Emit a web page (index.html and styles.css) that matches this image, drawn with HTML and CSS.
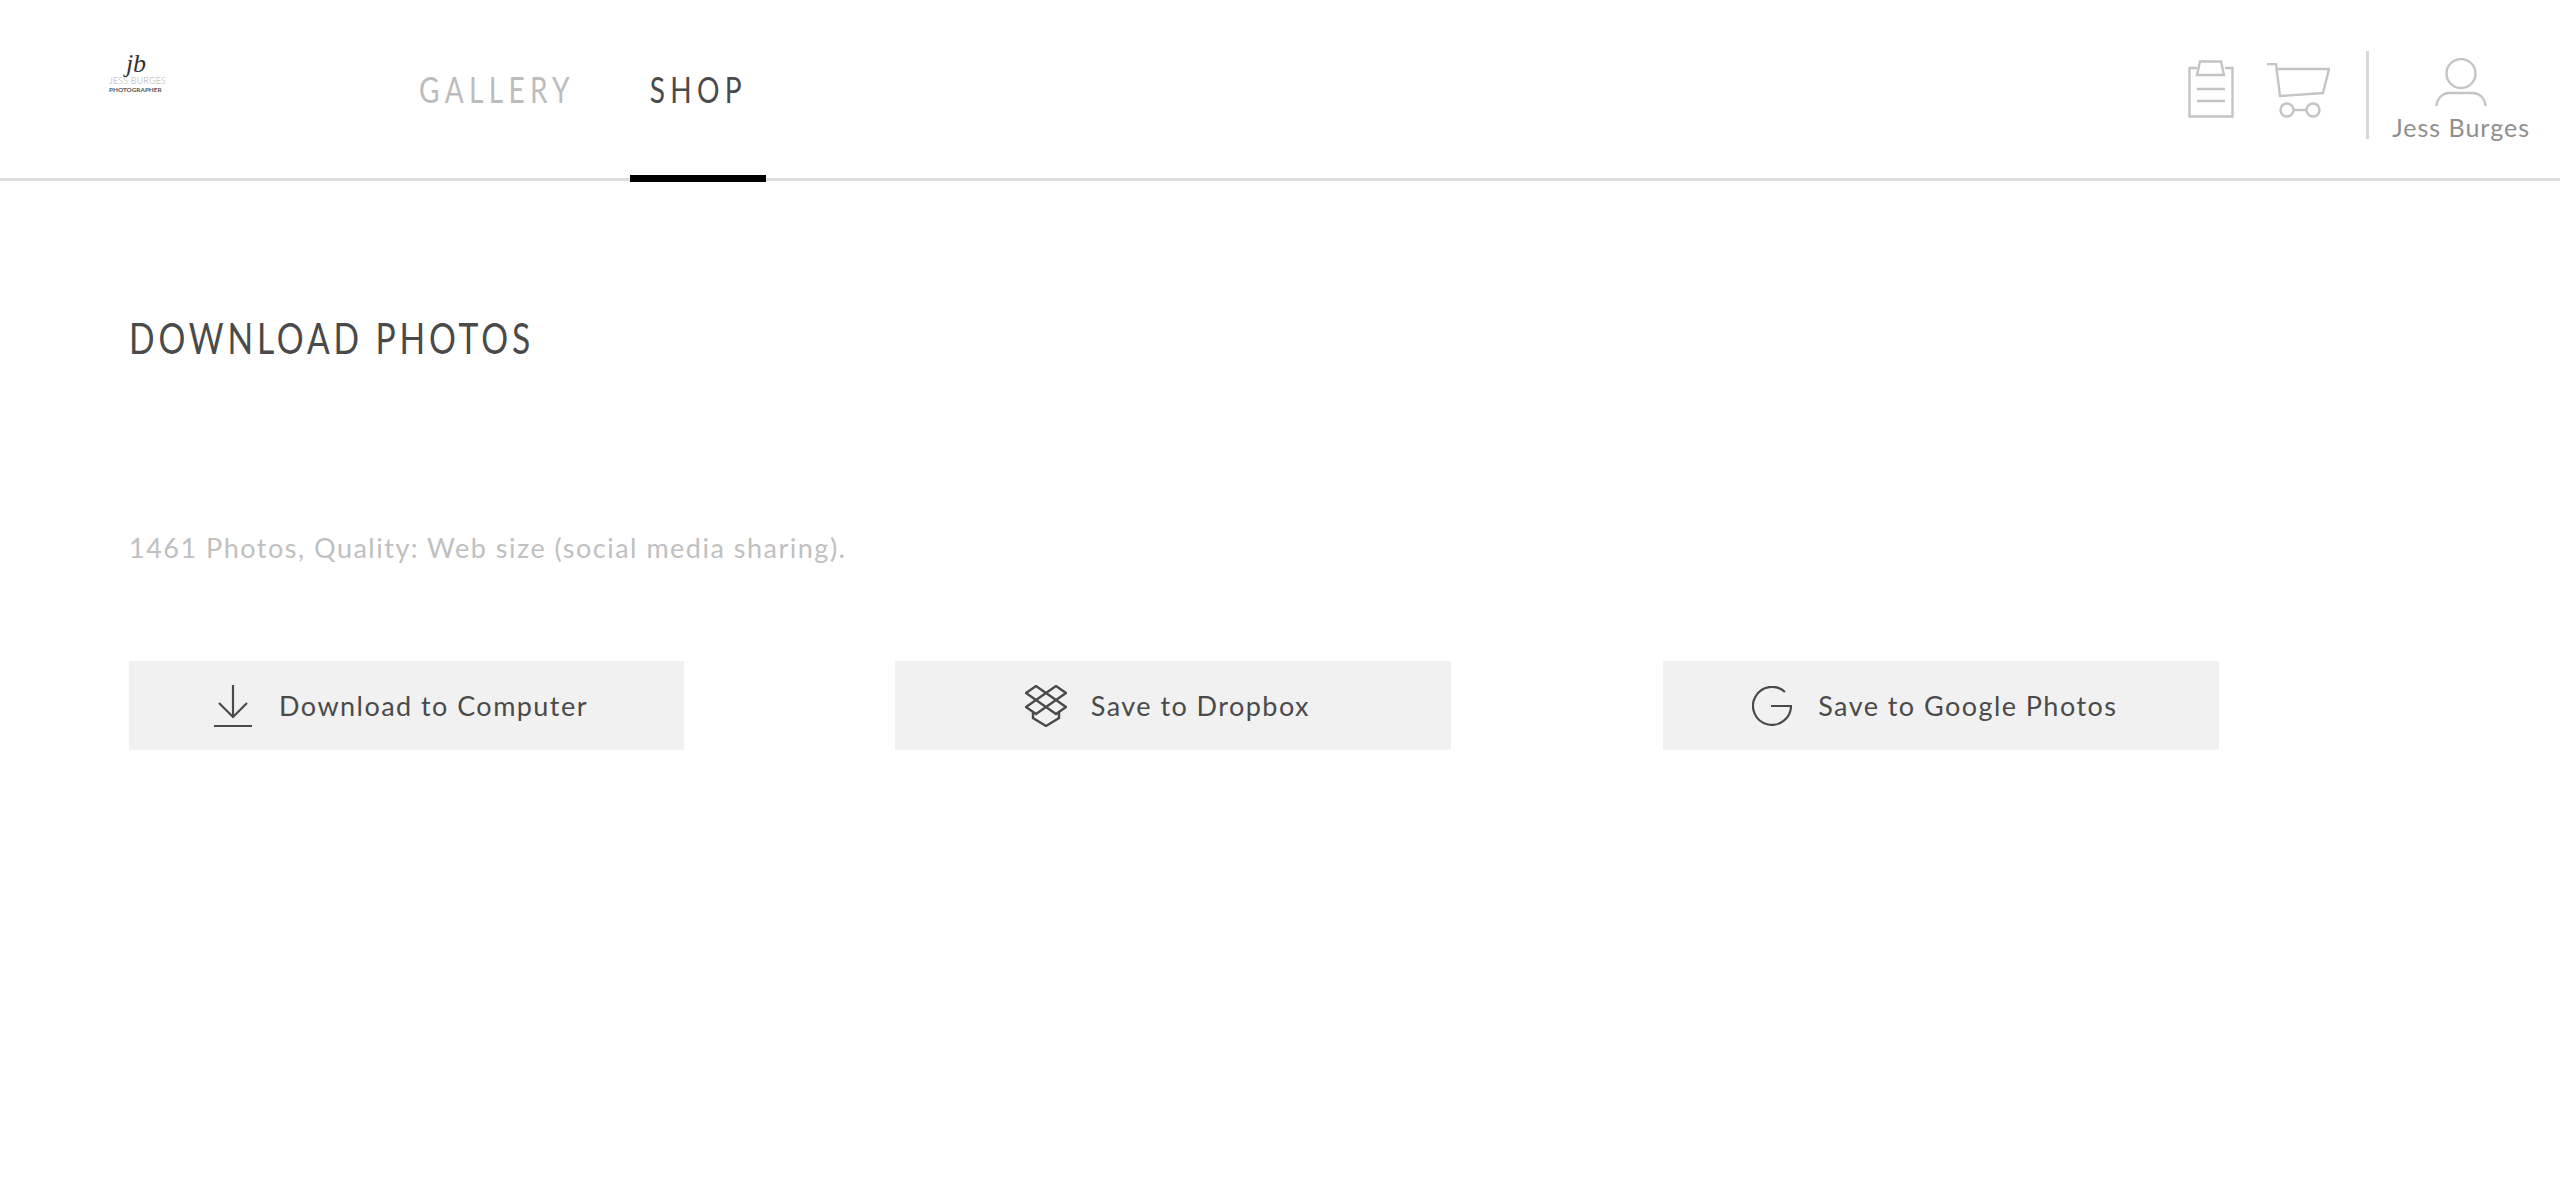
FILE: index.html
```html
<!DOCTYPE html>
<html lang="en">
<head>
<meta charset="utf-8">
<title>Download Photos</title>
<link rel="stylesheet" href="styles.css">
</head>
<body>
<header class="topbar">
  <a class="logo">
    <span class="logo-mark">jb</span>
    <span class="logo-name">JESS BURGES</span>
    <span class="logo-role">PHOTOGRAPHER</span>
  </a>
  <nav class="nav">
    <a class="nav-item nav-item-gallery"><span class="narrow">GALLERY</span></a>
    <a class="nav-item nav-item-active"><span class="narrow">SHOP</span></a>
  </nav>
  <div class="tools">
    <svg class="icon-clip" width="46" height="58" viewBox="0 0 46 58" fill="none" stroke="#c4c4c4" stroke-width="2.4">
      <path d="M9 8H1.5V56.5H44.5V8H37"/>
      <path d="M12 1.5H33L36 15H9Z"/>
      <path d="M9 29H37M9 41H37"/>
    </svg>
    <svg class="icon-cart" width="64" height="56" viewBox="0 0 64 56" fill="none" stroke="#c4c4c4" stroke-width="2.4">
      <path d="M1 1H10L14 33L57 30L63 6H11"/>
      <circle cx="21" cy="47" r="6.5"/>
      <circle cx="47" cy="47" r="6.5"/>
      <path d="M27.5 47H40.5"/>
    </svg>
    <div class="divider"></div>
    <div class="user">
      <svg width="52" height="48" viewBox="0 0 52 48" fill="none" stroke="#c4c4c4" stroke-width="2.4">
        <circle cx="26" cy="15.5" r="14.5"/>
        <path d="M1.5 48C2 40 8 35 14 35H38C44 35 50 40 50.5 48"/>
      </svg>
      <span class="user-name">Jess Burges</span>
    </div>
  </div>
</header>
<main class="content">
  <h1 class="title">DOWNLOAD PHOTOS</h1>
  <p class="summary">1461 Photos, Quality: Web size (social media sharing).</p>
  <div class="actions">
    <button class="action">
      <svg width="40" height="44" viewBox="0 0 40 44" fill="none" stroke="#4a4a4a" stroke-width="2.2">
        <path d="M20 1V33M6 19L20 33L34 19M1 42H39"/>
      </svg>
      <span>Download to Computer</span>
    </button>
    <button class="action action-dropbox">
      <svg width="42" height="42" viewBox="0 0 42 42" fill="none" stroke="#4a4a4a" stroke-width="2.4">
        <path d="M11 1L21 8L11 15L1 8Z"/>
        <path d="M31 1L41 8L31 15L21 8Z"/>
        <path d="M11 15L21 22L11 29L1 22L11 15Z"/>
        <path d="M31 15L41 22L31 29L21 22Z"/>
        <path d="M8 27V33L21 41L34 33V27"/>
      </svg>
      <span>Save to Dropbox</span>
    </button>
    <button class="action">
      <svg width="40" height="40" viewBox="0 0 40 40" fill="none" stroke="#4a4a4a" stroke-width="2.2">
        <path d="M33 6A19 19 0 1 0 39 20H19"/>
      </svg>
      <span>Save to Google Photos</span>
    </button>
  </div>
</main>
</body>
</html>
```
FILE: styles.css
```css
* { box-sizing: border-box; }
html, body { margin: 0; padding: 0; }
body {
  width: 2560px;
  height: 1202px;
  background: #fff;
  font-family: "Lato", "Liberation Sans", sans-serif;
  color: #4a4a4a;
  overflow: hidden;
}
.topbar {
  height: 181px;
  border-bottom: 3px solid #dedede;
  display: flex;
  align-items: stretch;
}
.logo {
  width: 400px;
  padding: 52px 0 0 109px;
  display: flex;
  flex-direction: column;
  align-items: flex-start;
}
.logo-mark {
  width: 54px;
  text-align: center;
  font: italic 26px/24px "Liberation Serif", serif;
  color: #333;
}
.logo-name {
  font: 300 9px/10px "Lato", sans-serif;
  color: #aaa;
  width: 54px;
  white-space: nowrap;
  letter-spacing: 0.15px;
}
.logo-role {
  font: 700 6.4px/8px "Lato", sans-serif;
  color: #555;
  width: 54px;
  white-space: nowrap;
}
.nav {
  display: flex;
  align-items: stretch;
  gap: 36px;
}
.nav-item {
  width: 136px;
  display: flex;
  align-items: center;
  justify-content: center;
  font-size: 36px;
  font-weight: 400;
  letter-spacing: 6.8px;
  color: #bcbcbc;
  position: relative;
}
.nav-item-gallery { width: 194px; }
.narrow {
  display: block;
  flex: none;
  transform: scaleX(0.78);
}
.nav-item-active {
  color: #4a4a4a;
}
.nav-item-active::after {
  content: "";
  position: absolute;
  left: 0;
  right: 0;
  bottom: -4px;
  height: 7px;
  background: #000;
}
.tools {
  margin-left: auto;
  display: flex;
  align-items: center;
  padding-right: 30px;
}
.icon-clip { margin-right: 32px; }
.icon-cart { margin-right: 36px; margin-top: 4px; }
.divider {
  width: 3px;
  height: 88px;
  background: #d8d8d8;
  margin: 12px 23px 0 0;
}
.user {
  display: flex;
  flex-direction: column;
  align-items: center;
  gap: 6px;
  margin-top: 22px;
}
.user-name {
  font-size: 25px;
  line-height: 30px;
  letter-spacing: 1px;
  color: #8f8f8f;
}
.content {
  padding: 132px 0 0 129px;
}
.title {
  margin: 0;
  font-size: 42px;
  line-height: 50px;
  font-weight: 400;
  letter-spacing: 4.8px;
  color: #4a4a4a;
  transform: scaleX(0.8);
  transform-origin: left center;
}
.summary {
  margin: 168px 0 0;
  font-size: 27px;
  line-height: 34px;
  letter-spacing: 1.5px;
  color: #c0c0c0;
}
.actions {
  display: grid;
  grid-template-columns: 555px 556px 556px;
  column-gap: 211.4px;
  margin-top: 96px;
}
.action {
  height: 89px;
  background: #f1f1f1;
  border: 0;
  padding: 0 12px 0 0;
  display: flex;
  align-items: center;
  justify-content: center;
  gap: 26px;
  font-family: inherit;
  font-size: 27px;
  letter-spacing: 1.45px;
  color: #4a4a4a;
}
.action-dropbox { gap: 24px; }
```
